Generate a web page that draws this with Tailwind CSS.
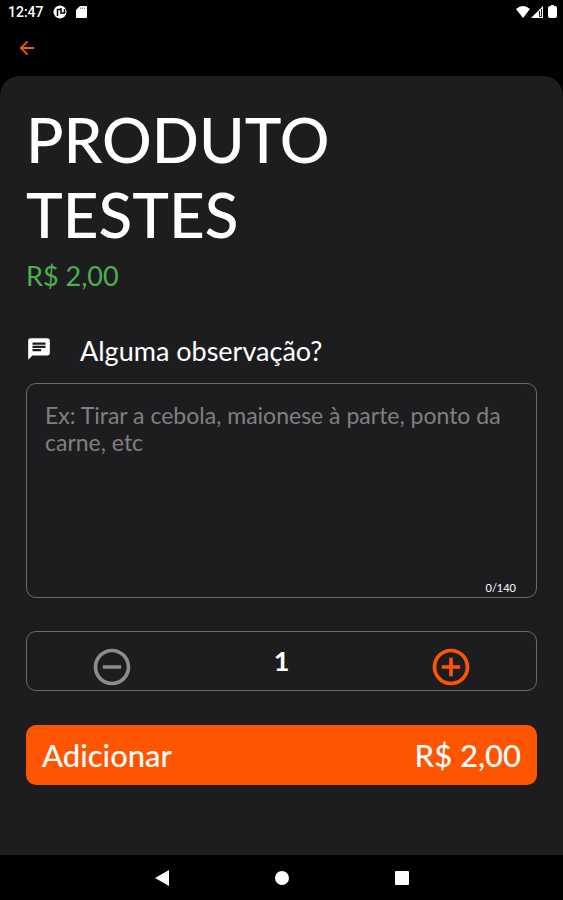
<!DOCTYPE html>
<html lang="pt-BR">
<head>
  <meta charset="UTF-8" />
  <meta name="viewport" content="width=device-width, initial-scale=1.0"/>
  <title>Produto Testes</title>
  <script src="https://cdn.jsdelivr.net/npm/@tailwindcss/browser@4"></script>
</head>
<body class="bg-black text-white min-h-screen flex flex-col font-['Lato','Open_Sans',sans-serif]">
  <!-- Status bar -->
  <div class="h-6 pl-2 pr-[6px] flex items-center justify-between">
    <div class="flex items-center gap-2">
      <span class="text-sm font-medium font-['Roboto',sans-serif]">12:47</span>
      <svg class="w-4 h-4" viewBox="0 0 16 16">
        <circle cx="8" cy="8" r="6.5" fill="white"/>
        <path d="M5.500 12V5.500H9M9 4v5h3.500V5" fill="none" stroke="black" stroke-width="1.500"/>
      </svg>
      <svg class="w-3 h-3" viewBox="0 0 12 12">
        <path d="M4 0h6a1 1 0 0 1 1 1v10a1 1 0 0 1-1 1H1a1 1 0 0 1-1-1V4z" fill="white"/>
        <path d="M4.500 1.500v1.500M6.500 1.500v1.500M8.500 1.500v1.500" stroke="black" stroke-width="0.500"/>
      </svg>
    </div>
    <div class="flex items-center">
      <svg class="w-[14px] h-[14px]" viewBox="0 0 14 14"><path d="M0 4Q7-2 14 4L7 13z" fill="white"/></svg>
      <svg class="w-[14px] h-[14px]" viewBox="0 0 14 14">
        <path d="M1 13L13 1V13z" fill="white"/>
        <path d="M9.500 6v5.500h2V4" fill="none" stroke="black" stroke-width="0.900"/>
      </svg>
      <svg class="w-[9px] h-[14px] ml-1" viewBox="0 0 9 14"><path d="M3 0h3v1h1a2 2 0 0 1 2 2v8a2 2 0 0 1-2 2H2a2 2 0 0 1-2-2V3a2 2 0 0 1 2-2h1z" fill="white"/></svg>
    </div>
  </div>

  <header class="h-[52px] px-4 pb-1 flex items-center">
    <button type="button" aria-label="Voltar">
      <svg class="w-[22px] h-[22px]" viewBox="0 0 24 24" fill="#ff5500"><path d="M20 11H7.830l5.590-5.590L12 4l-8 8 8 8 1.410-1.410L7.830 13H20v-2z"/></svg>
    </button>
  </header>

  <main class="flex-1 bg-[#1d1d1f] rounded-t-[20px] px-[26px] pt-[26px] pb-6">
    <h1 class="text-[62px] leading-[75px] font-medium">PRODUTO<br>TESTES</h1>
    <p class="mt-2 text-[27px] leading-8 text-[#4caf50]">R$ 2,00</p>

    <form>
      <div class="mt-[43px] flex items-center">
        <svg class="w-[26px] h-[26px] mb-1" viewBox="0 0 24 24" fill="white"><path d="M20 2H4c-1.100 0-1.990.9-1.990 2L2 22l4-4h14c1.100 0 2-.9 2-2V4c0-1.100-.9-2-2-2zM6 9h12v2H6V9zm8 5H6v-2h8v2zm4-6H6V6h12v2z"/></svg>
        <label for="obs" class="ml-7 text-[27px] leading-8">Alguma observação?</label>
      </div>

      <div class="mt-4 h-[215px] flex flex-col border border-[#6b6b6b] rounded-[10px] px-[18px] pt-[18px]">
        <textarea id="obs" maxlength="140" class="flex-1 w-full resize-none outline-none bg-transparent text-[23px] leading-[27px] placeholder:text-[#808080]" placeholder="Ex: Tirar a cebola, maionese à parte, ponto da carne, etc"></textarea>
        <span id="count" class="self-end pr-[2px] text-[11px] leading-[18px]">0/140</span>
      </div>

      <div class="mt-[33px] h-[60px] grid grid-cols-3 items-center justify-items-center border border-[#6b6b6b] rounded-[10px]">
        <button type="button" id="minus" aria-label="Diminuir" class="pt-3">
          <svg class="w-11 h-11" viewBox="0 0 24 24" fill="#8c8c8c"><path d="M7 11v2h10v-2H7zm5-9C6.480 2 2 6.480 2 12s4.480 10 10 10 10-4.480 10-10S17.520 2 12 2zm0 18c-4.410 0-8-3.590-8-8s3.590-8 8-8 8 3.590 8 8-3.590 8-8 8z"/></svg>
        </button>
        <span id="qty" class="text-[27px] font-bold">1</span>
        <button type="button" id="plus" aria-label="Aumentar" class="pt-3">
          <svg class="w-11 h-11" viewBox="0 0 24 24" fill="#ff5500"><path d="M13 7h-2v4H7v2h4v4h2v-4h4v-2h-4V7zm-1-5C6.480 2 2 6.480 2 12s4.480 10 10 10 10-4.480 10-10S17.520 2 12 2zm0 18c-4.410 0-8-3.590-8-8s3.590-8 8-8 8 3.590 8 8-3.590 8-8 8z"/></svg>
        </button>
      </div>

      <button type="button" class="mt-[34px] w-full h-[60px] px-4 flex items-center justify-between rounded-[10px] bg-[#ff5500] text-[31px] font-medium">
        <span>Adicionar</span>
        <span id="total">R$ 2,00</span>
      </button>
    </form>
  </main>

  <!-- Android navigation -->
  <nav class="h-[45px] flex items-center justify-center gap-[104px]">
    <button type="button" aria-label="Voltar"><svg class="w-4 h-4" viewBox="0 0 16 16" fill="white"><path d="M15 0v16L1 8z"/></svg></button>
    <button type="button" aria-label="Início"><svg class="w-4 h-4" viewBox="0 0 16 16" fill="white"><circle cx="8" cy="8" r="7"/></svg></button>
    <button type="button" aria-label="Recentes"><svg class="w-4 h-4" viewBox="0 0 16 16" fill="white"><rect x="1" y="1" width="14" height="14" rx="1"/></svg></button>
  </nav>

  <script>
    const obs = document.getElementById('obs');
    const qty = document.getElementById('qty');
    let amount = 1;

    function setAmount(n) {
      amount = Math.max(1, n);
      qty.textContent = amount;
      document.getElementById('total').textContent = 'R$ ' + (amount * 2).toFixed(2).replace('.', ',');
    }

    document.getElementById('minus').addEventListener('click', () => setAmount(amount - 1));
    document.getElementById('plus').addEventListener('click', () => setAmount(amount + 1));
    obs.addEventListener('input', () => {
      document.getElementById('count').textContent = `${obs.value.length}/140`;
    });
  </script>
</body>
</html>
